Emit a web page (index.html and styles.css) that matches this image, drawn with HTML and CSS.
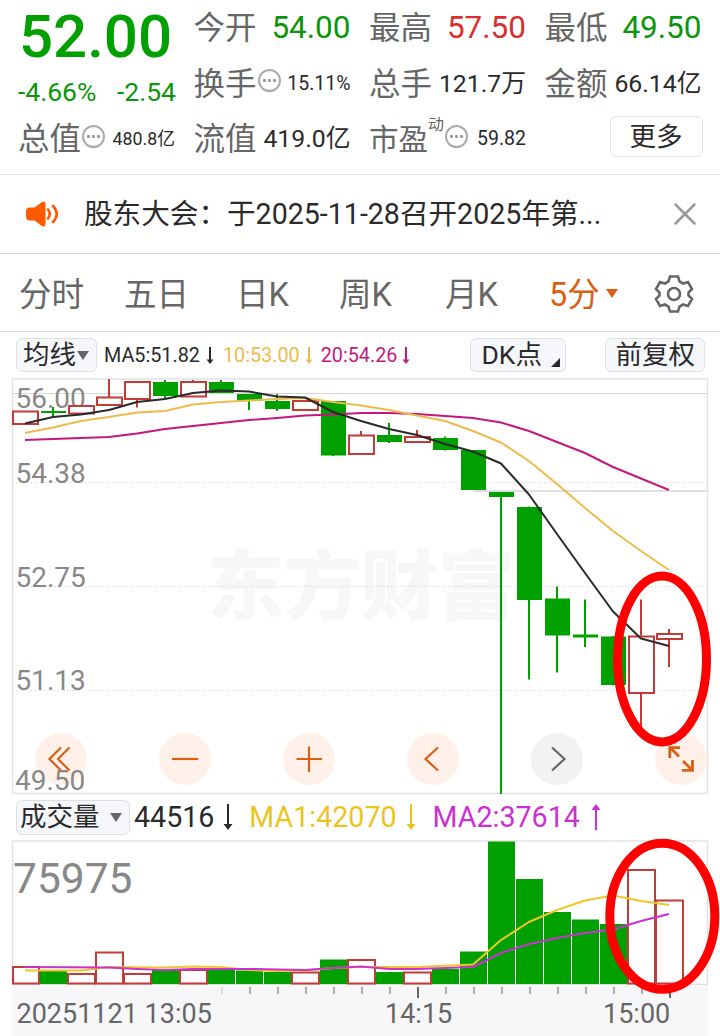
FILE: index.html
```html
<!DOCTYPE html>
<html lang="zh-CN">
<head>
    <meta charset="UTF-8">
    <meta name="viewport" content="width=device-width, initial-scale=1.0">
    <title>个股行情</title>
    <link rel="stylesheet" href="styles.css">
</head>
<body>
    <header class="quote">
        <div class="price">52.00</div>
        <div class="cell"><span class="label">今开</span><span class="value big down">54.00</span></div>
        <div class="cell"><span class="label">最高</span><span class="value big up">57.50</span></div>
        <div class="cell"><span class="label">最低</span><span class="value big down">49.50</span></div>

        <div class="change"><span>-4.66%</span><span>-2.54</span></div>
        <div class="cell"><span class="label">换手</span><i class="more-dots"></i><span class="value small">15.11%</span></div>
        <div class="cell"><span class="label">总手</span><span class="value">121.7万</span></div>
        <div class="cell"><span class="label">金额</span><span class="value">66.14亿</span></div>

        <div class="cell"><span class="label">总值</span><i class="more-dots"></i><span class="value tiny">480.8亿</span></div>
        <div class="cell"><span class="label">流值</span><span class="value">419.0亿</span></div>
        <div class="cell"><span class="label pe">市盈</span><sup>动</sup><i class="more-dots"></i><span class="value small">59.82</span></div>
        <button class="more">更多</button>
    </header>

    <section class="news">
        <svg class="speaker" width="34" height="28" viewBox="0 0 34 28">
            <path d="M3 7.500h6.500l7.500-5.500q3-1.500 3.500 1.500v21q-.5 3-3.500 1.500l-7.500-5.500H5q-4 0-4-4v-5q0-4 4-4z" fill="#ff5a00"/>
            <path d="M23 9.500q3.500 4.500 0 9M28 6q7.500 8 0 16" fill="none" stroke="#ff5a00" stroke-width="2.600" stroke-linecap="round"/>
        </svg>
        <span class="news-text">股东大会：于2025-11-28召开2025年第...</span>
        <svg class="close" width="24" height="24" viewBox="0 0 24 24">
            <path d="M2.500 2.500l19 19M21.500 2.500l-19 19" stroke="#999" stroke-width="2.500" stroke-linecap="round"/>
        </svg>
    </section>

    <nav class="tabs">
        <span>分时</span>
        <span>五日</span>
        <span>日K</span>
        <span>周K</span>
        <span>月K</span>
        <span class="active">5分<i class="caret"></i></span>
        <svg width="40" height="40" viewBox="-20 -20 40 40" fill="none" stroke="#666" stroke-width="2.600">
            <path d="M-4-17.500H4L5.500-12.500L9-10.500L14-12L18-5L14.500-1.500V1.500L18 5L14 12L9 10.500L5.500 12.500L4 17.500H-4L-5.500 12.500L-9 10.500L-14 12L-18 5L-14.500 1.500V-1.500L-18-5L-14-12L-9-10.500L-5.500-12.500Z"/>
            <circle r="6"/>
        </svg>
    </nav>

    <main class="charts">
        <div class="toolbar ma-bar">
            <button class="chip ma-chip">均线<i class="caret"></i></button>
            <span class="ma5">MA5:51.82<svg class="arrow" width="8" height="17" viewBox="0 0 8 17"><path d="M4 0v13"/><path class="tip" d="M.5 12.500h7L4 17z"/></svg></span>
            <span class="ma10">10:53.00<svg class="arrow" width="8" height="17" viewBox="0 0 8 17"><path d="M4 0v13"/><path class="tip" d="M.5 12.500h7L4 17z"/></svg></span>
            <span class="ma20">20:54.26<svg class="arrow" width="8" height="17" viewBox="0 0 8 17"><path d="M4 0v13"/><path class="tip" d="M.5 12.500h7L4 17z"/></svg></span>
            <button class="chip dk-chip">DK点<i class="corner"></i></button>
            <button class="chip fq-chip">前复权</button>
        </div>

        <div class="price-panel">
            <div class="controls">
                <i><svg viewBox="0 0 52 52"><path d="M26 14.500L14.500 26L26 37.500M34.500 14.500L23 26L34.500 37.500"/></svg></i>
                <i><svg viewBox="0 0 52 52"><path d="M13 26h26"/></svg></i>
                <i><svg viewBox="0 0 52 52"><path d="M13.500 26h25.500M26 13.500v25.500"/></svg></i>
                <i><svg viewBox="0 0 52 52"><path d="M31 14.500L18.500 26L31 37.500"/></svg></i>
                <i class="disabled"><svg viewBox="0 0 52 52"><path d="M21 14.500L33.500 26L21 37.500"/></svg></i>
                <i><svg viewBox="0 0 52 52"><path class="bold" d="M24 23.500L15 14.500M14.800 25V14.700H25M28 28L37 37M37.500 27V37.300H27"/></svg></i>
            </div>
            <svg class="plot" width="720" height="416" viewBox="0 378 720 416">
                <text class="watermark" x="207" y="614" textLength="308">东方财富</text>
                <path class="frame" d="M12.500 379H707.500V793.500H12.500Z"/>
                <path class="grid" d="M13 393.500H707"/>
                <path class="grid dotted" d="M13 482.500H707M13 586.500H707M13 690.500H707"/>
                <path class="prev-close" d="M473 491H707"/>

                <g class="axis-text">
                    <text x="15.500" y="407.500">56.00</text>
                    <text x="15.500" y="483">54.38</text>
                    <text x="15.500" y="587">52.75</text>
                    <text x="15.500" y="690">51.13</text>
                </g>

                <!-- falling candles -->
                <path class="wick-down" d="M53 407v9M165 380v19M221 380v12M249 400v10M277 394v17M333 401v55M389 423v20M445 436.500v14M501 492v302M529 506.500v173M557 586.500v86M585 599.500v47.500M613 636v49.500"/>
                <g class="body-down">
                    <rect x="41" y="411" width="25" height="2"/>
                    <rect x="153" y="382" width="25" height="14"/>
                    <rect x="209" y="382" width="25" height="11"/>
                    <rect x="237" y="394" width="25" height="7"/>
                    <rect x="265" y="401" width="25" height="8"/>
                    <rect x="321" y="401" width="25" height="54.500"/>
                    <rect x="377" y="435" width="25" height="7"/>
                    <rect x="433" y="438" width="25" height="12"/>
                    <rect x="461" y="450" width="25" height="40"/>
                    <rect x="489" y="492" width="25" height="5"/>
                    <rect x="517" y="507" width="25" height="93"/>
                    <rect x="545" y="598.500" width="25" height="37"/>
                    <rect x="573" y="634.500" width="25" height="3"/>
                    <rect x="601" y="636.500" width="25" height="48.500"/>
                </g>

                <!-- rising candles -->
                <path class="wick-up" d="M109 379v18M137 399v8.500M193 380v2M361 431v4M417 430v7M641 599.500v36M641 693v40M669 629v4M669 640v27"/>
                <g class="body-up">
                    <rect x="13" y="411.500" width="25" height="12.500"/>
                    <rect x="69" y="406" width="25" height="7.500"/>
                    <rect x="97" y="397.500" width="25" height="7.500"/>
                    <rect x="125" y="382" width="25" height="17"/>
                    <rect x="181" y="382" width="25" height="14.500"/>
                    <rect x="293" y="401" width="25" height="9"/>
                    <rect x="349" y="435.500" width="25" height="18.500"/>
                    <rect x="405" y="437" width="25" height="5"/>
                    <rect x="629" y="636.500" width="25" height="56.500"/>
                    <rect x="657" y="634" width="25" height="5"/>
                </g>

                <polyline class="line" stroke="#c2187f" points="25,440 109,437 137,433.500 165,429 193,426 221,423 249,420 277,418 305,415.500 333,414.500 361,413 389,413 417,414 445,416 473,418 501,422.500 529,431 557,442 585,453 613,467 641,478.500 669,490"/>
                <polyline class="line" stroke="#edbb4b" points="25,433 53,427.500 81,421 109,417 137,412.500 165,411 193,404.500 221,402 249,400.500 277,399 305,398 333,402 361,405.500 389,410 417,415.500 445,421 473,431 501,442.500 529,461 557,484 585,508 613,531 641,551 669,570"/>
                <polyline class="line" stroke="#2a2a2a" points="25,423.500 53,417 81,414.500 109,410 137,402 165,399 193,393 221,390.500 249,391.500 277,396.500 305,397.500 333,412 361,421 389,429 417,435 445,444 473,451.500 501,463.500 529,494.500 557,534 585,573 613,611.500 641,638.500 669,646"/>
                <text class="axis-text" x="15" y="790">49.50</text>
            </svg>
        </div>

        <div class="toolbar vol-bar">
            <button class="chip vol-chip">成交量<i class="caret"></i></button>
            <span class="vol">44516<svg class="arrow" width="10" height="26" viewBox="0 0 10 26"><path d="M5 0v21"/><path class="tip" d="M.5 20h9L5 26z"/></svg></span>
            <span class="vma1">MA1:42070<svg class="arrow" width="10" height="26" viewBox="0 0 10 26"><path d="M5 0v21"/><path class="tip" d="M.5 20h9L5 26z"/></svg></span>
            <span class="vma2">MA2:37614<svg class="arrow" width="10" height="26" viewBox="0 0 10 26"><path d="M5 26V5"/><path class="tip" d="M.5 6h9L5 0z"/></svg></span>
        </div>

        <svg class="plot" width="720" height="145" viewBox="0 840 720 145">
            <path class="frame" d="M12.500 841H707.500V984.500H12.500Z"/>
            <text class="axis-text vol-max" x="13" y="892.500">75975</text>
            <g class="body-down">
                <rect x="39" y="971" width="28" height="13"/>
                <rect x="152" y="969.500" width="28" height="14.500"/>
                <rect x="208" y="969.500" width="27" height="14.500"/>
                <rect x="236" y="970.500" width="27" height="13.500"/>
                <rect x="264" y="972" width="27" height="12"/>
                <rect x="320" y="959.500" width="27" height="24.500"/>
                <rect x="376" y="972" width="27" height="12"/>
                <rect x="432" y="969" width="27" height="15"/>
                <rect x="460" y="951.500" width="27" height="32.500"/>
                <rect x="488" y="841.500" width="27" height="142.500"/>
                <rect x="516" y="879" width="27" height="105"/>
                <rect x="544" y="912" width="27" height="72"/>
                <rect x="572" y="919.500" width="27" height="64.500"/>
                <rect x="600" y="924" width="28" height="60"/>
            </g>
            <g class="body-up">
                <rect x="13" y="967" width="26" height="16.500"/>
                <rect x="68" y="974" width="27" height="9.500"/>
                <rect x="96" y="952.500" width="27" height="31"/>
                <rect x="124" y="974" width="27" height="9.500"/>
                <rect x="180" y="970" width="27" height="13.500"/>
                <rect x="292" y="972.500" width="27" height="11"/>
                <rect x="348" y="960" width="27" height="23.500"/>
                <rect x="404" y="972.500" width="27" height="11"/>
                <rect x="628" y="870" width="27" height="113.500"/>
                <rect x="656" y="900.500" width="27" height="83"/>
            </g>
            <polyline class="line" stroke="#f0c52a" points="25,970.500 81,970.500 109,967 165,967.500 193,966.500 221,967 249,970 277,971 305,970.500 333,968 361,967 417,967 473,964.500 501,940 529,922 557,910 585,900.500 613,895.500 641,901 669,905"/>
            <polyline class="line" stroke="#c832cf" points="25,967 109,967.500 137,969 165,970 193,969 249,969 305,970 333,968 361,966.500 389,969 417,969 445,968 473,967 501,953 529,944 557,938 585,933 613,929.500 641,921 669,914"/>
        </svg>

        <svg class="plot" width="720" height="51" viewBox="0 985 720 51">
            <rect x="12" y="985" width="696" height="51" fill="#f7f7fa"/>
            <path class="tick" d="M250 987v7M278 987v7M306 987v7M334 987v7M362 987v7M390 987v7M446 987v7M474 987v7M502 987v7M530 987v7M558 987v7M586 987v7M614 987v7M642 987v7"/>
            <path class="tick faint" d="M222 987v7"/>
            <path class="tick major" d="M418 987v11M670 987v11"/>
            <g class="time-text">
                <text x="16.500" y="1023">20251121 13:05</text>
                <text x="385" y="1023">14:15</text>
                <text x="603" y="1023">15:00</text>
            </g>
        </svg>

        <!-- hand-drawn marks around the last two bars -->
        <svg class="marks" width="720" height="704" viewBox="0 332 720 704">
            <ellipse cx="662" cy="659" rx="44.500" ry="83"/>
            <ellipse cx="662.300" cy="916.300" rx="52.500" ry="73"/>
        </svg>
    </main>
</body>
</html>
```
FILE: styles.css
```css
* {
    box-sizing: border-box;
}
body {
    margin: 0;
    width: 720px;
    background: #fff;
    color: #2a2a2a;
    font-family: Roboto, "Noto Sans CJK SC", sans-serif;
    overflow: hidden;
}
i {
    font-style: normal;
}
button {
    font-family: inherit;
    color: inherit;
    padding: 0;
}
svg {
    display: block;
    flex: none;
}

/* quote header */
.quote {
    display: grid;
    grid-template-columns: repeat(4, 157px);
    grid-template-rows: 55px 56px 55px;
    column-gap: 18.500px;
    height: 175px;
    padding: 0 18px;
    border-bottom: 1px solid #e6e6e6;
}
.price {
    font-size: 60px;
    font-weight: 500;
    line-height: 73px;
    padding-left: 1px;
    color: #00a000;
}
.change {
    display: flex;
    justify-content: space-between;
    width: 158px;
    font-size: 26.500px;
    line-height: 73px;
    color: #0a960a;
}
.cell {
    display: flex;
    align-items: center;
    white-space: nowrap;
    line-height: 55px;
}
.label {
    padding-top: 2px;
    font-size: 31.500px;
    color: #666;
}
.value {
    margin-left: auto;
    font-size: 24.800px;
}
.value.big {
    font-size: 31.500px;
}
.value.small {
    font-size: 19.500px;
}
.value.tiny {
    font-size: 17.800px;
}
.up {
    color: #d9302e;
}
.down {
    color: #0a960a;
}
.label.pe {
    padding-top: 4px;
    font-size: 29.500px;
}
.cell sup {
    align-self: flex-start;
    margin-top: 5px;
    font-size: 16px;
    line-height: 18px;
    color: #666;
}
.more-dots {
    width: 23px;
    height: 23px;
    flex: none;
    margin: -5px 0 0 1px;
    border: 2px solid #aaa;
    border-radius: 50%;
    background: radial-gradient(circle, #999 1.300px, transparent 1.800px) center / 5px 5px repeat-x;
    background-clip: content-box;
    padding: 0 2px;
}
.more {
    width: 93px;
    height: 41px;
    margin: 5px -1px 0 auto;
    border: 1.500px solid #e3e3e3;
    border-radius: 6px;
    background: #fff;
    font-size: 26.500px;
    line-height: 36px;
}

/* announcement */
.news {
    display: flex;
    align-items: center;
    height: 79px;
    padding: 0 23px 0 25px;
    border-bottom: 1px solid #d8d8d8;
}
.news-text {
    margin-left: 25px;
    font-size: 28.600px;
    line-height: 78px;
    white-space: nowrap;
}
.close {
    margin-left: auto;
}

/* period tabs */
.tabs {
    display: grid;
    grid-template-columns: 105px 112px 103px 106px 104px 105px 40px;
    align-items: center;
    height: 78px;
    padding-left: 19px;
    border-bottom: 1px solid #dcdcdc;
    font-size: 32.500px;
    line-height: 78px;
    color: #666;
}
.tabs span {
    padding-top: 2px;
    white-space: nowrap;
}
.tabs .active {
    display: flex;
    align-items: center;
    color: #d95f12;
}
.caret {
    display: inline-block;
    border: 6px solid transparent;
    border-top: 9px solid;
    border-bottom: 0;
}
.tabs .caret {
    margin: -3px 0 0 6px;
}

/* charts */
.charts {
    position: relative;
}
.toolbar {
    display: flex;
    align-items: center;
    height: 46px;
    padding-left: 16px;
    white-space: nowrap;
}
.toolbar span {
    display: flex;
    align-items: center;
}
.chip {
    display: flex;
    align-items: center;
    flex: none;
    height: 34px;
    border: 1.500px solid #dddfe3;
    border-radius: 6px;
    background: #f6f7fa;
    font-size: 26.500px;
    line-height: 32px;
}
.chip .caret {
    color: #666;
}
.ma-bar {
    font-size: 19.800px;
}
.ma-chip {
    width: 81px;
    padding-left: 6px;
    margin-right: 7px;
}
.ma-chip .caret {
    margin-left: 1px;
}
.dk-chip {
    width: 96px;
    margin-left: 60px;
    padding-left: 10px;
}
.fq-chip {
    width: 100px;
    margin-left: 39px;
    padding-left: 9px;
}
.corner {
    align-self: flex-end;
    margin: 0 0 4px 9px;
    border-left: 9px solid transparent;
    border-bottom: 9px solid #2a2a2a;
}
.arrow {
    margin-left: 5px;
    fill: none;
    stroke: currentColor;
    stroke-width: 2;
}
.arrow .tip {
    fill: currentColor;
    stroke: none;
}
.ma-bar .ma5 .arrow {
    margin-left: 6px;
}
.ma10 {
    margin-left: 9px;
    color: #edbb4b;
}
.ma20 {
    margin-left: 8px;
    color: #c2187f;
}
.vol-bar {
    font-size: 28.600px;
}
.vol-chip {
    width: 114px;
    height: 35px;
    padding-left: 3px;
    margin-right: 4px;
}
.vol-chip .caret {
    margin-left: 10px;
}
.vol-bar .arrow {
    margin-left: 9px;
}
.vma1 {
    margin-left: 16px;
    color: #edc41f;
}
.vma2 {
    margin-left: 17px;
    color: #cc2fd2;
}
.vol-bar .vma2 .arrow {
    margin-left: 11px;
}
.price-panel {
    position: relative;
    height: 416px;
}
.plot {
    position: relative;
    overflow: visible;
}
.controls {
    position: absolute;
    left: 35px;
    right: 12px;
    bottom: 9px;
    display: flex;
    gap: 72px;
    overflow: hidden;
}
.controls i {
    flex: none;
    width: 52px;
    height: 52px;
    border-radius: 50%;
    background: #fff1ea;
}
.controls path {
    fill: none;
    stroke: #d95f12;
    stroke-width: 2.200;
}
.controls .bold {
    stroke-width: 2.800;
}
.controls .disabled {
    background: #f2f2f2;
}
.controls .disabled path {
    stroke: #666;
}
.frame {
    fill: none;
    stroke: #e2e2e2;
    stroke-width: 1.500;
}
.grid {
    stroke: #d6d6d6;
}
.dotted {
    stroke-dasharray: 1 2;
}
.prev-close {
    stroke: #d2d5d9;
    stroke-width: 1.500;
}
.watermark {
    font-size: 77px;
    font-weight: 900;
    fill: #f7f7f7;
}
.axis-text {
    font-size: 28px;
    fill: #888;
}
.vol-max {
    font-size: 42.500px;
}
.time-text {
    font-size: 27px;
    fill: #666;
}
.body-down {
    fill: #00a000;
}
.wick-down {
    stroke: #00a000;
    stroke-width: 2;
}
.body-up {
    fill: #fff;
    stroke: #c23b37;
    stroke-width: 2;
}
.wick-up {
    stroke: #c23b37;
    stroke-width: 2;
}
.line {
    fill: none;
    stroke-width: 2;
    stroke-linejoin: round;
}
.tick {
    stroke: #aaa;
    stroke-width: 2;
}
.tick.faint {
    stroke: #ddd;
}
.tick.major {
    stroke: #666;
}
.marks {
    position: absolute;
    left: 0;
    top: 0;
    fill: none;
    stroke: #f00;
    stroke-width: 9;
}
```
